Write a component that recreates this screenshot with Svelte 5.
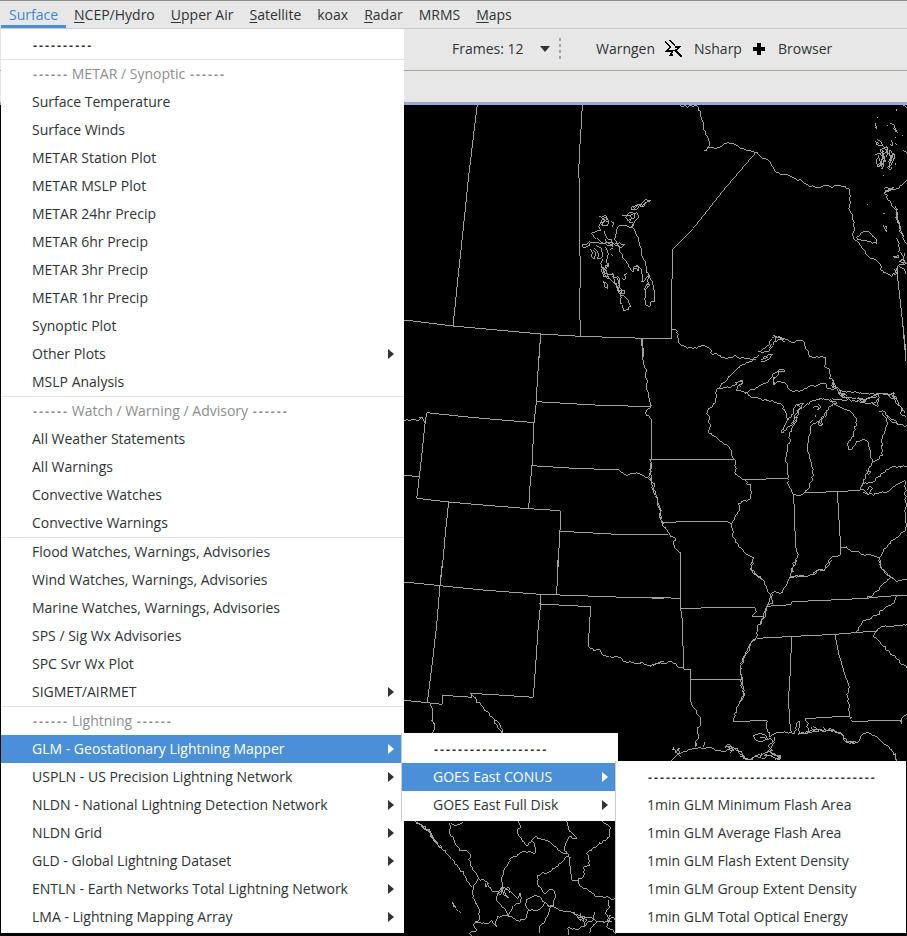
<script>
  const menuBar = [
    { label: 'Surface', key: false, active: true },
    { label: 'NCEP/Hydro', key: true },
    { label: 'Upper Air', key: true },
    { label: 'Satellite', key: true },
    { label: 'koax', key: false },
    { label: 'Radar', key: true },
    { label: 'MRMS', key: false },
    { label: 'Maps', key: true }
  ];

  const glmProducts = [
    { label: '-'.repeat(38) },
    { label: '1min GLM Minimum Flash Area' },
    { label: '1min GLM Average Flash Area' },
    { label: '1min GLM Flash Extent Density' },
    { label: '1min GLM Group Extent Density' },
    { label: '1min GLM Total Optical Energy' }
  ];

  const glmSectors = [
    { label: '-'.repeat(19) },
    { label: 'GOES East CONUS', children: glmProducts, more: true },
    { label: 'GOES East Full Disk', more: true }
  ];

  const surfaceMenu = [
    { label: '-'.repeat(10) },
    { sep: true },
    { label: '------ METAR / Synoptic ------', heading: true },
    { label: 'Surface Temperature' },
    { label: 'Surface Winds' },
    { label: 'METAR Station Plot' },
    { label: 'METAR MSLP Plot' },
    { label: 'METAR 24hr Precip' },
    { label: 'METAR 6hr Precip' },
    { label: 'METAR 3hr Precip' },
    { label: 'METAR 1hr Precip' },
    { label: 'Synoptic Plot' },
    { label: 'Other Plots', more: true },
    { label: 'MSLP Analysis' },
    { sep: true },
    { label: '------ Watch / Warning / Advisory ------', heading: true },
    { label: 'All Weather Statements' },
    { label: 'All Warnings' },
    { label: 'Convective Watches' },
    { label: 'Convective Warnings' },
    { sep: true },
    { label: 'Flood Watches, Warnings, Advisories' },
    { label: 'Wind Watches, Warnings, Advisories' },
    { label: 'Marine Watches, Warnings, Advisories' },
    { label: 'SPS / Sig Wx Advisories' },
    { label: 'SPC Svr Wx Plot' },
    { label: 'SIGMET/AIRMET', more: true },
    { sep: true },
    { label: '------ Lightning ------', heading: true },
    { label: 'GLM - Geostationary Lightning Mapper', children: glmSectors, more: true },
    { label: 'USPLN - US Precision Lightning Network', more: true },
    { label: 'NLDN - National Lightning Detection Network', more: true },
    { label: 'NLDN Grid', more: true },
    { label: 'GLD - Global Lightning Dataset', more: true },
    { label: 'ENTLN - Earth Networks Total Lightning Network', more: true },
    { label: 'LMA - Lightning Mapping Array', more: true }
  ];

  // Long runs of dashes are set in their own face so they space evenly.
  const split = (text) => text.split(/(-{2,})/).filter(Boolean);

  // Map tiles. Coordinates are thirds of a pixel from the tile origin;
  // a leading "~" marks a natural line (coast, river) that is drawn rough.
  const tiles = [
    {
      x: 404, y: 100,
      lines: [
        '220,15 214,60 208,110 200,180 192,245 182,345 170,460 160,550 152,630 147,678',
        '535,15 530,105 526,160 524,225 527,255 527,410 529,520 527,610 529,708',
        '0,660 60,667 147,678 300,692 410,702 530,709 690,714 780,715',
        '410,702 404,780',
        '712,715 717,740 717,780',
        '~740,300 728,298 715,310 700,315 685,320 680,328 695,330 705,318 722,312 740,302',
        '~684,318 692,330 700,312 712,320 728,306',
        '~655,346 668,350 680,336 692,342 688,356 672,362 664,352 680,346 700,338 704,352 692,366 684,380 690,388',
        '~670,342 684,352 676,366 690,372 680,382',
        '~690,388 697,405 705,425 712,452 718,475 724,495 732,520 738,535 750,560 752,575 750,605 740,605 738,620 726,615 725,585 724,560 735,548 728,540 736,522 718,545 713,545 713,510 700,500 690,500 688,517 680,510 668,488 655,468 645,448 640,432 632,420 634,405 640,385 650,375 665,376 678,382 690,388',
        '~690,505 702,512 706,500 696,496', '~724,570 738,556 730,550',
        '~585,348 592,352 605,346 610,356 600,365 590,370 598,378 612,372 614,362 602,352 592,362 584,378 590,392 575,396 563,402 572,412 588,422 600,430 625,425 634,436 655,440 662,433 640,430 620,436 590,432 572,428 556,424 548,432 536,432 536,440 548,440 556,430',
        '~590,352 604,362 594,374 608,378 614,366 598,358',
        '~600,392 603,405 612,418 622,418 625,440 612,430 605,418',
        '~560,448 565,460 562,470 572,478 575,465 566,450',
        '~575,436 590,442 595,460 590,476 580,476 582,460 572,445',
        '~604,442 611,455 608,480 615,500 605,508 612,525 625,520 632,535 640,530 648,545 640,560 645,572 660,570 662,580 648,582 640,568 636,550 620,540 612,530 600,530 592,515 590,490 596,478',
        '~594,500 600,520 612,538 606,520 598,508 614,490',
        '~626,520 632,545 642,570 656,580 646,560 640,535',
        '~648,582 650,600 656,622 660,634 674,630 680,618 672,600 660,588 648,582',
        '~596,545 602,560 612,565 608,550 598,544',
        '~598,502 606,512 596,520 602,526',
        '~655,535 662,540 660,525 670,520',
        '~622,364 630,370 624,380', '~618,448 628,444', '~622,462 626,468'
      ]
    },
    {
      x: 650, y: 100,
      lines: [
        '~90,15 96,22 104,15 112,22 120,15 130,22 142,17 150,40 158,62 160,85 168,105 176,122 174,142 163,153 172,145 195,145 218,134 235,128 252,132 275,147 300,152 318,157 332,170 356,182 368,200 380,217 402,222 432,234 455,243 478,260 500,262 525,257 550,260 570,257 596,265 600,285 596,325 608,345 612,370 612,392 610,416 625,425 640,448 650,465 668,475 688,490 700,518 725,530 738,510',
        '318,157 225,265 130,385 68,447 68,530 65,540 65,715',
        '0,715 65,715',
        '742,500 742,525 755,640 768,760',
        '~65,690 82,692 86,730 102,738 128,745 152,738 175,742 188,765 200,760 228,778 255,765 270,775 310,778 325,765',
        '~620,412 632,400 650,394 662,400 672,412 680,420 680,430 662,424 645,420 622,418 620,412',
        '~771,240 755,256 740,266 722,272 708,272 702,280 712,285 715,300 725,318 738,328 742,350 748,375 756,400 764,425 770,432',
        '~700,268 730,262 715,276 705,272', '~704,278 724,266 732,270', '~735,318 742,330 740,360 750,378 748,395 760,408',
        '~738,325 744,345 738,358 748,370 754,392',
        '~675,70 680,88 676,80', '~720,70 732,74 736,88 742,98 730,84', '~680,118 690,122 698,136 680,136 676,124 686,130',
        '~700,140 712,142 710,158 698,160 690,150 702,146 712,152', '~676,165 690,160 700,172 695,190 684,200 678,186 682,175',
        '~684,166 690,182 686,194', '~695,150 704,180 700,200', '~698,152 696,175 702,195', '~702,160 706,185', '~708,138 714,160 708,170',
        '~716,160 722,170 718,190 712,205', '~722,150 734,165 730,182 722,195 718,210 726,200', '~726,120 728,138 720,134',
        '~730,160 726,190', '~724,165 720,185', '~718,150 724,178', '~726,160 722,190', '~690,190 700,205 692,206', '~682,200 696,198',
        '~738,28 741,32', '~680,50 683,54', '~757,106 760,108', '~760,152 771,158', '~760,15 771,24', '~750,440 744,455',
        '~710,76 713,78', '~735,110 738,112', '~736,130 739,134', '~736,190 738,194', '~698,215 700,217',
        '~700,340 706,340', '~700,376 706,388 712,396 706,378', '~740,415 748,430 744,440', '~730,470 745,465 745,475 732,474',
        '~750,480 762,488 748,495 740,510 734,520', '~752,455 758,468', '~765,460 762,480 770,492', '~745,497 760,505 768,522',
        '~746,485 756,478 768,488 758,496', '~732,508 740,520 732,526',
        '~650,313 653,313', '~698,228 701,228'
      ]
    },
    {
      x: 404, y: 320,
      lines: [
        '410,42 406,100 400,180 397,245 390,308 384,437 378,500 374,566',
        '397,245 450,248 570,255 740,260',
        '~714,55 717,85 718,120 726,148 728,200 735,235 740,262 725,280 740,296',
        '742,296 742,418', '736,418 780,418',
        '~737,418 742,435 735,470 742,490 752,520 760,545 768,570 770,600 780,612',
        '68,278 180,290 270,298 392,308',
        '68,278 62,320 54,400 46,470 40,520 38,535',
        '~0,302 20,300 42,304 48,292 56,294 62,310',
        '0,466 46,470',
        '38,535 134,546 235,555 374,566 469,572 468,634 464,700 460,780',
        '134,546 124,640 118,710 110,780',
        '384,437 495,444 645,450',
        '~645,450 668,466 680,460 705,460 722,470 738,478',
        '467,634 550,638 640,643 780,643'
      ]
    },
    {
      x: 650, y: 320,
      lines: [
        '~318,118 290,128 262,145 240,168 222,188 200,208',
        '~200,208 225,204 248,196 262,188 278,182 276,192 262,200 258,212 268,210 280,214 292,218',
        '~256,188 270,184 280,188 266,194 274,200',
        '~292,218 300,210 325,200 345,190 360,178 368,162 385,152 400,148 405,154 392,154 380,168 370,180 372,196 380,186 400,186 412,200 420,210 440,212 456,212 475,200 500,196 525,188 532,205 550,208 560,202',
        '~284,216 300,228 330,236 360,244 385,250 400,258 404,270 408,290 414,300',
        '~414,300 425,290 430,270 440,252 460,250 455,265 445,275 440,290 436,310 425,315 412,322 400,340 396,338 405,315 414,300',
        '~440,256 452,262 444,270 434,296 428,308', '~432,290 440,300 424,310',
        '~460,262 480,245 510,234 540,242 550,250 535,262 530,280 510,300 490,312 480,330 476,360 472,380 476,400 486,430 490,465 480,500 465,518 445,528 430,524 418,500 412,460 408,420 414,380 420,345 432,310',
        '~490,262 500,258 508,265 500,270', '~506,252 512,262 504,270', '~495,285 496,292', '~510,300 516,315 508,318 508,302', '~532,278 515,292 514,318', '~488,302 480,308',
        '~550,250 575,262 600,272 615,290 618,310 610,350 594,370 595,388 606,388 618,368 635,360 652,362 660,390 666,430 655,450 645,468 640,488 630,505',
        '~325,95 345,85 358,75 362,60 372,50 388,50 402,60 388,58 372,66 366,80 350,95 332,98',
        '~370,48 388,52 410,58 430,68 440,60 458,60 466,80 475,100 485,111 525,111 528,128 524,140 540,152 538,175 552,185 550,200 570,212 585,215 620,218 680,220 700,220 722,222 732,218 740,240 752,260 766,280',
        '~332,120 350,108 368,103 355,118 340,126 332,122', '~340,116 355,112', '~365,72 358,84', '~382,48 376,62', '~395,54 405,66',
        '~370,170 372,195', '~552,180 545,196 560,205 552,190', '~560,205 565,220 580,226 590,235', '~570,212 575,230 600,232 640,240 680,230 672,224 660,234 640,245',
        '~565,215 585,222 575,232 568,222', '~575,222 592,228', '~625,234 640,236 648,244 630,242', '~660,222 686,224 680,245 668,252 685,258 684,235', '~540,238 560,250 545,254',
        '~545,236 600,240 640,246 670,252', '~686,222 715,225 722,235 736,236 722,218 735,220', '~728,225 738,250 756,265 752,280 768,290',
        '~688,276 705,275 712,290 725,305 750,315 771,317', '~696,278 710,295 708,320 696,350 698,405 680,420 668,425', '~712,285 722,298 735,302 748,315',
        '~200,208 196,250 176,265 170,280 180,292 176,340 198,352 222,372 244,390 250,418 258,432 256,462 270,472 284,480',
        '~284,480 302,500 304,520 295,540 264,550 268,572 252,600 244,615 248,650 265,675 285,700 312,714 302,750 322,770 335,778',
        '284,479 414,475', '0,418 250,418',
        '34,607 165,604 232,604 246,614',
        '465,518 560,515 630,511', '431,525 436,660 436,680',
        '562,516 572,680 571,704',
        '~630,508 650,518 672,526 690,518 712,516 725,505 745,490 766,482', '~630,510 640,490 665,488 690,470 710,448 735,440 771,438',
        '~650,450 662,455 655,465', '~640,518 655,525 668,505 660,498 650,510', '~765,482 768,560 768,630 750,645 728,660 712,680 700,690 688,714 660,702 640,704 615,695 600,690 590,680 572,682',
        '~571,704 548,710 535,725 520,752 505,748 480,765 430,772 418,775', '~436,680 442,712 430,740 420,775', '~688,714 692,740 712,765 728,778',
        '~0,430 4,475 12,500 20,530 30,565 32,600 50,630 65,650 78,655 70,672 80,690 92,698',
        '92,698 92,780', '0,643 55,643',
        '757,0 768,122', '0,245 1,265', '4,296 4,418'
      ]
    },
    {
      x: 404, y: 560,
      lines: [
        '116,0 108,75 98,195 86,300 70,428',
        '0,66 108,77 235,90 410,103 525,107 600,110 780,115',
        '462,0 458,105', '410,103 410,132 402,210 396,300 388,412 300,406 200,400 205,412 117,406 115,433 70,428 0,421',
        '406,132 560,140 556,200 553,260',
        '~553,260 570,272 585,268 600,286 630,292 648,292 665,305 700,312 712,306 740,318 780,304',
        '~205,405 230,435 250,455 265,472 285,488 296,518', '~80,433 85,460 86,485 92,498 86,518'
      ]
    },
    {
      x: 650, y: 560,
      lines: [
        '92,0 92,145 98,190 100,325', '92,145 215,143 315,142',
        '~315,142 320,155 306,170', '306,171 340,171',
        '0,112 92,115',
        '~0,320 20,308 50,310 65,305 80,318 100,326', '100,327 121,328 121,425', '121,360 274,360',
        '~121,425 140,455 152,485 142,510 142,540 135,562',
        '~306,0 302,28 325,48 345,65 352,95 362,105 352,135 342,160 335,185 322,205 320,230 302,255 295,275 282,295 270,325 276,360 280,385 284,405 268,430 258,450 250,482',
        '~362,100 368,130 348,140 345,165 330,195', '~318,235 300,252 285,285 272,312',
        '~272,315 274,345 272,365 282,400 270,432',
        '250,484 352,482', '~352,482 348,500 358,530 375,520 400,518 435,520',
        '320,235 415,230 555,223 615,218 680,213', '~680,213 700,200 735,196 771,192',
        '425,232 420,350 416,410 418,480 424,518',
        '555,224 566,280 585,345 598,380', '~598,380 592,410 598,440 598,468', '598,468 465,476', '~465,476 475,490 472,518',
        '~598,468 608,484', '608,484 750,481', '~750,481 756,492 760,470 771,464',
        '350,139 422,134 425,125 500,122 650,115 700,109 771,106',
        '~436,0 425,30 415,70 400,85 398,98 375,95 360,105', '~545,0 522,32 508,30 490,45 460,48 420,50',
        '~686,0 695,28 722,50 700,72 682,92 662,110 650,115', '~722,50 740,66 771,60', '~742,108 732,128 700,148 682,165 655,180 640,182 618,215',
        '~680,213 668,228 690,246 712,272 740,298 771,325',
        '~65,602 85,582 100,575 130,565 175,562 205,573 230,572 240,560 225,562 235,552 260,565 270,582 298,600 318,588 330,595 345,578 370,572 355,560 372,545 375,530',
        '~70,560 75,580 88,565 90,580', '~75,575 92,590', '~135,562 140,550', '~160,560 162,545', '~228,560 248,565 240,580', '~255,568 275,575 285,592', '~240,560 250,572 232,568', '~270,590 290,600 320,586 345,582 350,590 335,594',
        '~372,545 362,535 340,542 320,542 308,528 325,522 345,525 355,538 330,532', '~375,545 365,560 352,575 372,580 392,588 385,600 370,592 345,582',
        '~335,580 350,586 368,584 390,594 375,600', '~360,575 380,588 392,598', '~378,586 392,592 386,600',
        '~435,520 440,490 446,482 448,520', '~445,522 475,515 510,508 545,508 572,518 590,545 610,550 628,540 640,522 655,518 680,530 700,550 725,570 738,600',
        '~445,524 475,518 515,512 550,512 575,522 588,546 612,546', '~485,500 492,512 500,505 490,498', '~520,500 530,512 548,515', '~568,515 580,525', '~735,580 741,602', '~590,540 600,552 618,545'
      ]
    },
    {
      x: 380, y: 720,
      lines: [
        '~155,0 163,15 158,38', '~343,0 352,18 366,38',
        '~105,303 130,318 152,338 160,360 185,385 210,412 230,435 255,468 275,500', '~108,306 140,328 158,350 178,382 186,382', '~120,312 150,335 152,350 170,372', '~180,375 186,386',
        '~248,308 232,315 212,308 208,335 225,362 238,392 258,390 270,402 270,432 285,455 296,475 320,485 325,500 345,515 358,518 366,508',
        '~296,475 280,500 278,535 296,565 298,598 280,615 290,632 268,640 275,648', '~288,608 320,612 335,600 350,620 348,602 352,590 385,588',
        '~366,508 366,470 372,450 385,430 395,412 420,398 445,395 465,400 465,375 455,360 465,350',
        '~418,303 422,322 412,330 420,352 440,378 455,365', '~465,350 495,360 520,375 540,392 562,402 552,390 560,365 568,350 592,355 578,342 565,325 558,303',
        '~566,402 575,480 595,480', '~566,402 540,430 510,455 472,465 475,500 495,520 512,508 525,520 522,555 505,560',
        '~595,480 610,470 612,440 630,435 620,400 655,375 690,350 688,318 665,305', '~595,475 600,498 632,515 655,530 708,535',
        '~355,518 350,540 365,560 378,572 390,590 410,602 430,600 440,590 445,570 435,550 445,535 468,525 485,535 495,550 475,570 445,570',
        '~362,500 380,505 395,520 410,535 420,520 422,545 398,560 390,575 385,590', '~360,505 372,525 385,535 372,512 384,500 390,520', '~345,515 370,505 365,520 350,520',
        '~485,540 512,560 545,572 575,578 600,588 630,592 650,605 680,605 700,590 708,605', '~512,560 502,590 495,605 478,620 480,640', '~575,578 598,592 620,600 612,618 590,628 562,625 565,645', '~645,575 640,600 622,608 612,622', '~685,540 690,560 676,580 688,600 680,620 700,630 708,640', '~650,605 632,625 628,640', '~590,590 602,602 615,588', '~600,580 612,605 598,600', '~692,585 682,600 696,605',
        '~315,490 318,500 325,490', '~215,545 220,560 228,562 218,548', '~228,568 233,572', '~236,574 242,578'
      ]
    }
  ];

  let seed = 7;
  const rand = () => {
    seed = (seed * 16807) % 2147483647;
    return seed / 2147483647 - 0.5;
  };

  const toPath = (line) => {
    const rough = line[0] === '~';
    const pts = line.replace('~', '').split(' ').map((p) => p.split(',').map(Number));
    let d = `M${pts[0]}`;
    for (let i = 1; i < pts.length; i++) {
      const [ax, ay] = pts[i - 1];
      const [bx, by] = pts[i];
      const steps = rough ? Math.floor(Math.hypot(bx - ax, by - ay) / 6) : 0;
      for (let s = 1; s < steps; s++) {
        const x = ax + ((bx - ax) * s) / steps + rand() * 7;
        const y = ay + ((by - ay) * s) / steps + rand() * 7;
        d += `L${x.toFixed(1)},${y.toFixed(1)}`;
      }
      d += `L${bx},${by}`;
    }
    return d;
  };

  const map = tiles.map((t) => ({ ...t, d: t.lines.map(toPath).join('') }));
</script>

{#snippet menu(items, level)}
  <ul class="menu level-{level}" role="menu">
    {#each items as item}
      {#if item.sep}
        <li class="sep" role="separator"></li>
      {:else}
        <li role="none">
          <button class="item" class:open={item.children} role="menuitem" disabled={item.heading} aria-haspopup={item.more ? 'menu' : undefined}>
            <span class="label">{#each split(item.label) as part}{#if part.startsWith('--')}<span class="dashes">{part}</span>{:else}{part}{/if}{/each}</span>
            {#if item.more}
              <svg class="arrow" width="6" height="10" viewBox="0 0 6 10" aria-hidden="true"><path d="M0 0L6 5L0 10Z" /></svg>
            {/if}
          </button>
          {#if item.children}
            {@render menu(item.children, level + 1)}
          {/if}
        </li>
      {/if}
    {/each}
  </ul>
{/snippet}

<div class="app">
  <nav class="menubar" aria-label="Main menu">
    {#each menuBar as m}
      <button class="top" class:active={m.active}>{#if m.key}<u>{m.label[0]}</u>{m.label.slice(1)}{:else}{m.label}{/if}</button>
    {/each}
  </nav>

  <div class="toolbar">
    <div class="frames">
      <select aria-label="Frame count">
        <option>Frames: 12</option>
      </select>
      <svg width="10" height="6" viewBox="0 0 10 6" aria-hidden="true"><path d="M0 0H10L5 6Z" /></svg>
    </div>
    <span class="grip"></span>
    <button class="tool">Warngen</button>
    <button class="tool">
      <svg width="17" height="17" viewBox="0 0 17 17" aria-hidden="true">
        <path d="M0 1.500L5.500 7L1.500 11H7.500L5.500 15H8M4.500 0L10 5.500M9.500 7H14.500L10.500 10.500L16.500 16.500" fill="none" stroke="#000" stroke-width="1.500" shape-rendering="crispEdges" />
      </svg>
      Nsharp
    </button>
    <button class="tool">
      <svg width="14" height="14" viewBox="0 0 14 14" aria-hidden="true"><path d="M5 1H9V5H13V9H9V13H5V9H1V5H5Z" /></svg>
      Browser
    </button>
  </div>

  <div class="tabs"></div>

  <main class="map">
    <svg viewBox="0 105 907 831" preserveAspectRatio="xMinYMin slice" role="img" aria-label="Map of North America">
      {#each map as t}
        <path d={t.d} transform="translate({t.x} {t.y}) scale(0.33333)" />
      {/each}
    </svg>
  </main>

  {@render menu(surfaceMenu, 1)}
</div>

<style>
  :global(body) {
    margin: 0;
    background: #000;
  }

  .app {
    position: relative;
    display: flex;
    flex-direction: column;
    min-height: 100vh;
    overflow: hidden;
    box-sizing: border-box;
    background: #000;
    color: #2e3436;
    font: 14px/20px 'Open Sans', 'Noto Sans', sans-serif;
  }

  button,
  select {
    margin: 0;
    padding: 0;
    border: 0;
    background: none;
    color: inherit;
    font: inherit;
  }

  .menubar {
    display: flex;
    height: 29px;
    padding-left: 1px;
    box-sizing: border-box;
    border-top: 1px solid #8f8d89;
    border-bottom: 1px solid #cdcdcc;
    background: #e7e7e7;
  }

  .top {
    padding: 3px 8px 0;
    border-bottom: 3px solid transparent;
  }

  .top.active {
    color: #3d86d3;
    border-color: #4a90d9;
  }

  u {
    text-underline-offset: 2px;
  }

  .toolbar {
    display: flex;
    align-items: center;
    height: 42px;
    padding: 0 0 2px 452px;
    box-sizing: border-box;
    border-bottom: 1px solid #a8a79c;
    background: #e7e7e7;
  }

  .frames {
    display: flex;
    align-items: center;
  }

  .frames select {
    width: 88px;
    appearance: none;
    outline: none;
  }

  .frames svg {
    fill: #2e3436;
  }

  .grip {
    width: 2px;
    height: 22px;
    margin: 0 35px 0 9px;
    background: repeating-linear-gradient(#a5a497 0 3px, transparent 3px 6px);
  }

  .tool {
    display: flex;
    align-items: center;
    gap: 12px;
    margin-right: 10px;
  }

  .tabs {
    height: 34px;
    box-sizing: border-box;
    border-bottom: 2px solid #8cacec;
    background: linear-gradient(#e7e7e7 31px, #a8a79c 31px);
  }

  .map {
    flex: 1;
    display: flex;
    min-height: 831px;
  }

  .map svg {
    width: 100%;
  }

  .map path {
    fill: none;
    stroke: #a0a0a0;
    stroke-width: 3px;
    shape-rendering: crispEdges;
  }

  .menu {
    position: absolute;
    z-index: 1;
    margin: 0;
    padding: 2px 0;
    list-style: none;
    background: #fff;
  }

  .level-1 {
    top: 29px;
    left: 1px;
    width: 403px;
  }

  .level-2,
  .level-3 {
    top: -2px;
    left: calc(100% - 3px);
    border-left: 1px solid #ccc;
  }

  .level-2 {
    width: 216px;
  }

  .level-3 {
    width: 290px;
  }

  .menu li {
    position: relative;
  }

  .menu .sep {
    height: 1px;
    background: #e2e2e2;
  }

  .item {
    display: flex;
    align-items: center;
    justify-content: space-between;
    width: 100%;
    height: 28px;
    padding: 0 10px 0 31px;
    text-align: left;
    white-space: nowrap;
  }

  .item:disabled {
    color: #8b8e8f;
  }

  .item.open {
    background: #4a90d9;
    color: #fff;
  }

  .dashes {
    font: bold 10px/10px 'DejaVu Sans Mono', 'Liberation Mono', monospace;
    vertical-align: 1px;
  }

  .arrow {
    fill: currentColor;
  }
</style>
